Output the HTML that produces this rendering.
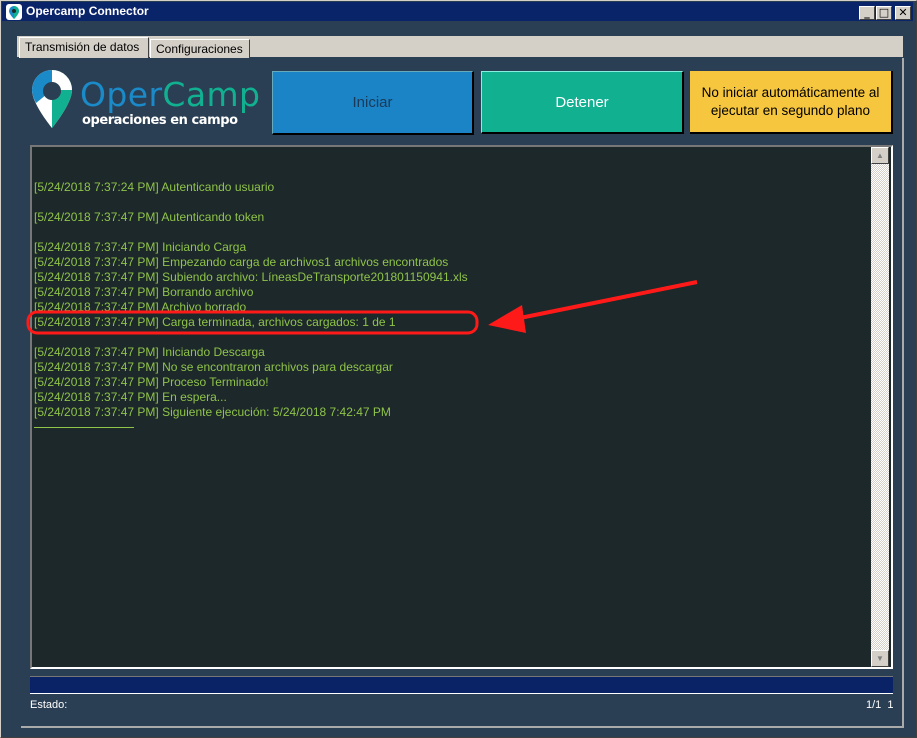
<!DOCTYPE html>
<html><head><meta charset="utf-8"><style>
*{margin:0;padding:0;box-sizing:border-box}
body{width:917px;height:738px;background:#2b3f54;font-family:"Liberation Sans",sans-serif;position:relative;overflow:hidden}
.abs{position:absolute}
#win{left:0;top:0;width:917px;height:738px;border:1px solid #d4d0c8;border-right-color:#404040;border-bottom-color:#404040}
#title{left:2px;top:2px;width:911px;height:19px;background:#0a246a;color:#fff;font:bold 12px "Liberation Sans",sans-serif;line-height:19px;padding-left:24px}
.tb{top:6px;width:16px;height:14px;background:#d4d0c8;border:1px solid #fff;border-right-color:#404040;border-bottom-color:#404040;font:bold 11px "DejaVu Sans";text-align:center;line-height:12px;color:#000}
#strip{left:17px;top:36px;width:886px;height:21px;background:#d4d0c8}
.tab{height:20px;background:#d4d0c8;border:1px solid #fff;border-right-color:#404040;border-bottom:none;font-size:12px;color:#000;padding:0 5px;line-height:18px}
#panel{left:21px;top:58px;width:883px;height:670px;border-right:2px solid #aaa;border-bottom:2px solid #aaa}
.btn{top:71px;height:64px;border-bottom:2px solid #000;border-right:2px solid #000;display:flex;align-items:center;justify-content:center;text-align:center;font-size:15px}
#log{left:30px;top:145px;width:863px;height:524px;background:#1c2829;border:2px solid #777;border-right-color:#fff;border-bottom-color:#fff;color:#8fc34a;font-size:12px;line-height:15px;padding:3px 0 0 2px;white-space:pre}
#sb{left:871px;top:147px;width:18px;height:520px;background:repeating-conic-gradient(#d4d0c8 0 25%,#fff 0 50%) 0 0/2px 2px}
.sbb{left:0;width:18px;height:17px;background:#d4d0c8;border:1px solid #fff;border-right-color:#404040;border-bottom-color:#404040;font-size:8px;color:#808080;text-align:center;line-height:15px}
</style></head><body>
<div id="win" class="abs"></div>
<div id="title" class="abs">Opercamp Connector</div>
<svg class="abs" style="left:6px;top:4px" width="16" height="16"><rect width="16" height="16" rx="3" fill="#fff"/><path d="M8 2a5 5 0 0 0-5 5c0 3 5 8 5 8s5-5 5-8a5 5 0 0 0-5-5z" fill="#1a8ac8"/><path d="M8 2a5 5 0 0 1 5 5c0 3-5 8-5 8z" fill="#10b090"/><circle cx="8" cy="7" r="2" fill="#1c2a2a"/></svg>
<div class="tb abs" style="left:859px">_</div><div class="tb abs" style="left:876px">□</div><div class="tb abs" style="left:895px">✕</div>
<div id="strip" class="abs"></div>
<div class="tab abs" style="left:19px;top:37px;height:21px;width:130px">Transmisión de datos</div>
<div class="tab abs" style="left:150px;top:39px;height:19px;width:100px">Configuraciones</div>
<div id="panel" class="abs"></div>
<svg class="abs" style="left:28px;top:66px" width="240" height="72">
<path d="M24 4a20 20 0 0 0-20 20c0 14 20 38 20 38s20-24 20-38a20 20 0 0 0-20-20z" fill="#fff"/>
<path d="M24 4a20 20 0 0 0-20 20c0 4 2 9 4 13l16-13z" fill="#1a8ac8"/>
<path d="M24 4a20 20 0 0 1 20 20c0 14-20 38-20 38z" fill="#10b090"/>
<path d="M24 4a20 20 0 0 1 20 20h-20z" fill="#fff"/>
<circle cx="24" cy="25" r="9" fill="#2b3f54"/>
<text x="52" y="40" font-family="DejaVu Sans" font-size="33" fill="#1a8ac8" textLength="180">Oper<tspan fill="#10b090">Camp</tspan></text>
<text x="54" y="58" font-family="DejaVu Sans" font-weight="bold" font-size="13" fill="#fff" textLength="156">operaciones en campo</text>
</svg>
<div class="btn abs" style="left:272px;width:202px;background:#1a84c6;border-top:1px solid #6ab;border-left:1px solid #6ab;color:#1a3a5a">Iniciar</div>
<div class="btn abs" style="left:481px;width:203px;top:71px;height:63px;background:#10b090;border-top:1px solid #8ed;border-left:1px solid #8ed;color:#fff">Detener</div>
<div class="btn abs" style="left:690px;width:203px;height:63px;background:#f6c63e;color:#000;font-size:13.5px;line-height:18px;padding:0 4px">No iniciar automáticamente al ejecutar en segundo plano</div>
<div id="log" class="abs">

[5/24/2018 7:37:24 PM] Autenticando usuario

[5/24/2018 7:37:47 PM] Autenticando token

[5/24/2018 7:37:47 PM] Iniciando Carga
[5/24/2018 7:37:47 PM] Empezando carga de archivos1 archivos encontrados
[5/24/2018 7:37:47 PM] Subiendo archivo: LíneasDeTransporte201801150941.xls
[5/24/2018 7:37:47 PM] Borrando archivo
[5/24/2018 7:37:47 PM] Archivo borrado
[5/24/2018 7:37:47 PM] Carga terminada, archivos cargados: 1 de 1

[5/24/2018 7:37:47 PM] Iniciando Descarga
[5/24/2018 7:37:47 PM] No se encontraron archivos para descargar
[5/24/2018 7:37:47 PM] Proceso Terminado!
[5/24/2018 7:37:47 PM] En espera...
[5/24/2018 7:37:47 PM] Siguiente ejecución: 5/24/2018 7:42:47 PM
<span style="display:inline-block;width:100px;border-top:1px solid #8fc34a;vertical-align:middle"></span></div>
<div id="sb" class="abs"><div class="sbb abs" style="top:0">▲</div><div class="sbb abs" style="bottom:0">▼</div></div>
<svg class="abs" style="left:0;top:0" width="917" height="738">
<rect x="28" y="312" width="449" height="21" rx="9" fill="none" stroke="#ff1a1a" stroke-width="3"/>
<line x1="697" y1="282" x2="520" y2="318" stroke="#ff1a1a" stroke-width="4"/>
<path d="M488 325l34-20 4 28z" fill="#ff1a1a"/>
</svg>
<div class="abs" style="left:30px;top:676px;width:863px;height:18px;background:#0a2266;border-top:1px solid #777;border-bottom:1px solid #fff"></div>
<div class="abs" style="left:30px;top:699px;color:#fff;font-size:11px">Estado:</div>
<div class="abs" style="left:866px;top:699px;color:#fff;font-size:11px">1/1&nbsp; 1</div>
</body></html>
